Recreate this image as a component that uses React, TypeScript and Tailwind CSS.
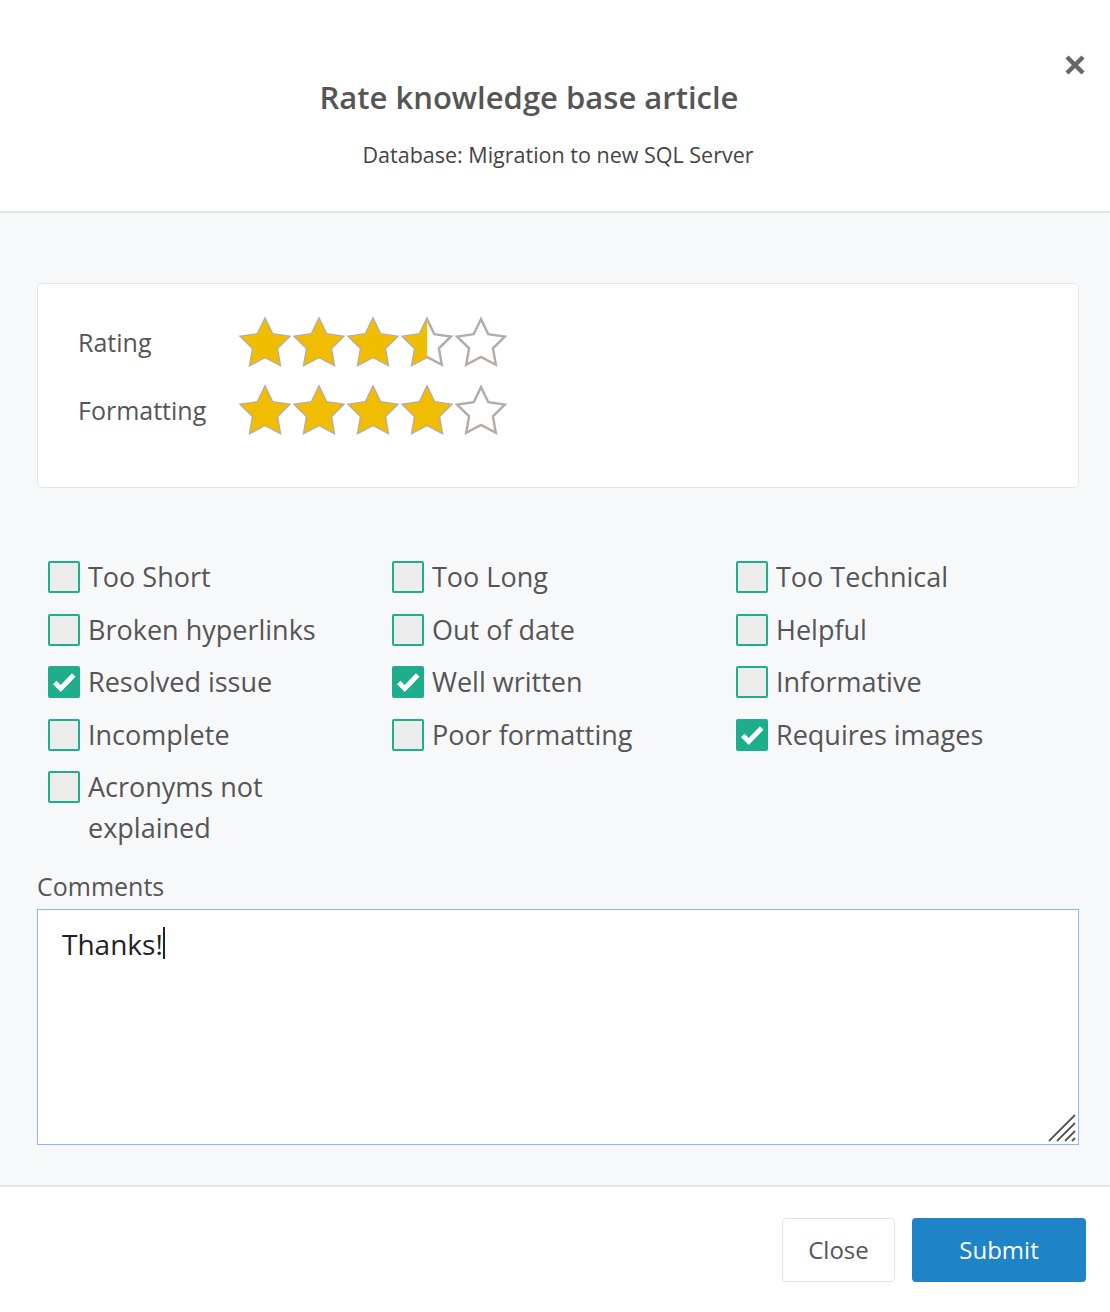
import { useState } from "react";

const STAR =
  "M12 1.4l3.25 6.7 7.35 1.05-5.3 5.2 1.28 7.35L12 18.2l-6.58 3.5 1.28-7.35-5.3-5.2 7.35-1.05z";

const OPTIONS = [
  { label: "Too Short", checked: false },
  { label: "Too Long", checked: false },
  { label: "Too Technical", checked: false },
  { label: "Broken hyperlinks", checked: false },
  { label: "Out of date", checked: false },
  { label: "Helpful", checked: false },
  { label: "Resolved issue", checked: true },
  { label: "Well written", checked: true },
  { label: "Informative", checked: false },
  { label: "Incomplete", checked: false },
  { label: "Poor formatting", checked: false },
  { label: "Requires images", checked: true },
  { label: "Acronyms not explained", checked: false },
];

/** One star; fill is 0, 0.5 or 1. */
function Star({ fill, id }: { fill: number; id: string }) {
  return (
    <svg viewBox="0 0 24 24" className="h-[54px] w-[54px] shrink-0">
      <defs>
        <clipPath id={id}>
          <rect x="0" y="0" width={24 * fill} height="24" />
        </clipPath>
      </defs>
      <path d={STAR} fill="#fff" stroke="#b4acac" strokeWidth="1.1" />
      {fill > 0 && <path d={STAR} fill="#f0bd00" clipPath={`url(#${id})`} />}
    </svg>
  );
}

function Stars({ value, name }: { value: number; name: string }) {
  return (
    <div className="flex">
      {[0, 1, 2, 3, 4].map((i) => (
        <Star key={i} id={`${name}-${i}`} fill={Math.max(0, Math.min(1, value - i))} />
      ))}
    </div>
  );
}

function Checkbox({ label, initial }: { label: string; initial: boolean }) {
  const [on, setOn] = useState(initial);
  return (
    <label className="flex cursor-pointer items-start gap-2 text-[27px] leading-[41px] text-[#555]">
      <button
        type="button"
        onClick={() => setOn(!on)}
        className={
          on
            ? "mt-[5px] flex h-[32px] w-[32px] shrink-0 items-center justify-center rounded-[2px] border-2 border-[#1fae8c] bg-[#1fae8c]"
            : "mt-[5px] h-[32px] w-[32px] shrink-0 rounded-[2px] border-2 border-[#1fae8c] bg-[#ececec]"
        }
      >
        {on && (
          <svg viewBox="0 0 24 24" className="h-[26px] w-[26px]">
            <path d="M3.5 12.5l5.5 5.5L21 5.5" fill="none" stroke="#fff" strokeWidth="4.5" />
          </svg>
        )}
      </button>
      <span className="max-w-[280px]">{label}</span>
    </label>
  );
}

export default function App() {
  return (
    <div className="flex min-h-[1312px] w-[1110px] flex-col bg-white font-['Open_Sans',sans-serif]">
      {/* header */}
      <header className="relative flex flex-col items-center border-b-2 border-[#e2e4e8] pb-[42px] pt-[77px]">
        <h1 className="pr-[52px] text-[31px] font-semibold leading-[40px] text-[#555]">
          Rate knowledge base article
        </h1>
        <p className="mt-[24px] pl-[6px] text-[21.5px] leading-[28px] text-[#444]">
          Database: Migration to new SQL Server
        </p>
        <button type="button" aria-label="Close" className="absolute right-[24px] top-[54px]">
          <svg viewBox="0 0 22 22" className="h-[22px] w-[22px]">
            <path d="M3 3l16 16M19 3L3 19" stroke="#666" strokeWidth="4.5" />
          </svg>
        </button>
      </header>

      {/* body */}
      <main className="flex flex-col bg-[#f7f8fa] pb-[40px] pl-[37px] pr-[31px] pt-[70px]">
        <section className="flex flex-col gap-[14px] rounded-[5px] border border-[#e3e5e8] bg-white pb-[49px] pl-[40px] pt-[32px]">
          <div className="flex items-center">
            <span className="w-[160px] text-[25px] text-[#555]">Rating</span>
            <Stars value={3.5} name="rating" />
          </div>
          <div className="flex items-center">
            <span className="w-[160px] text-[25px] text-[#555]">Formatting</span>
            <Stars value={4} name="formatting" />
          </div>
        </section>

        <div className="mt-[68px] grid grid-cols-[344px_344px_1fr] gap-y-[11.5px] pl-[11px]">
          {OPTIONS.map((o) => (
            <Checkbox key={o.label} label={o.label} initial={o.checked} />
          ))}
        </div>

        <label className="mt-[23px] text-[25px] leading-[30px] text-[#555]">Comments</label>
        <div className="relative mt-[8px]">
          <textarea
            defaultValue="Thanks!"
            className="block h-[236px] w-full resize-none border border-[#8db6f2] bg-white px-[24px] pt-[14px] text-[28px] leading-[40px] text-[#222] outline-none"
          />
          {/* caret shown after the typed text */}
          <span className="pointer-events-none absolute left-[126px] top-[18px] h-[32px] w-[2px] bg-[#222]" />
          <svg
            viewBox="0 0 30 30"
            className="pointer-events-none absolute bottom-[2px] right-[2px] h-[30px] w-[30px]"
          >
            <path
              d="M28 2L2 28M28 10L10 28M28 18L18 28M28 25L25 28"
              stroke="#555"
              strokeWidth="1.8"
            />
          </svg>
        </div>
      </main>

      {/* footer */}
      <footer className="flex justify-end gap-[17px] border-t-2 border-[#e2e4e8] pr-[24px] pt-[31px]">
        <button
          type="button"
          className="h-[64px] w-[113px] rounded-[4px] border border-[#e0e2e6] bg-white text-[24px] text-[#555]"
        >
          Close
        </button>
        <button
          type="button"
          className="h-[64px] w-[174px] rounded-[4px] bg-[#1e83c7] text-[24px] text-white"
        >
          Submit
        </button>
      </footer>
    </div>
  );
}
